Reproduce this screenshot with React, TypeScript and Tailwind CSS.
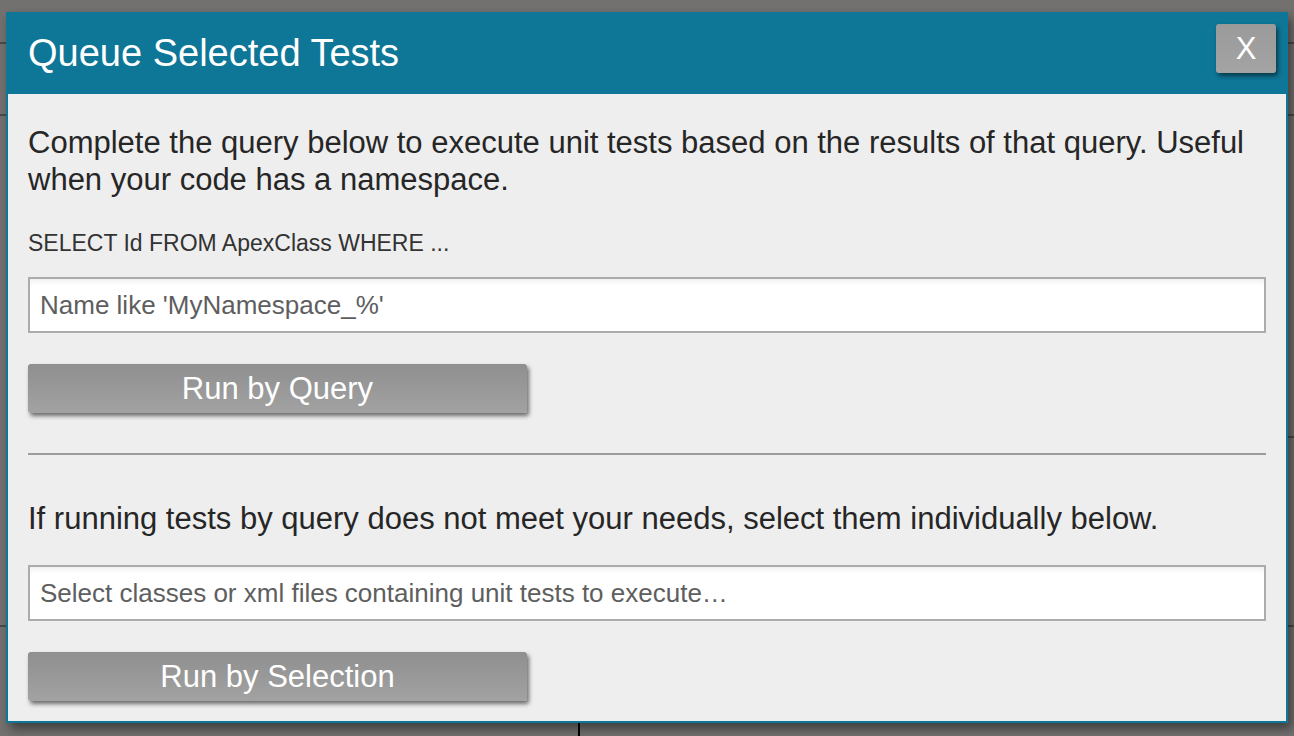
import React from "react";

function QueryInput({ placeholder }: { placeholder: string }) {
  return (
    <input
      type="text"
      placeholder={placeholder}
      className="block w-full h-[56px] border-2 border-[#acacac] bg-white px-[10px] text-[26px] text-[#555] placeholder:text-[#5e5e5e] outline-none shadow-[inset_0_6px_6px_-4px_rgba(0,0,0,0.08)] font-['Liberation_Sans',Arial,sans-serif]"
    />
  );
}

function GrayButton({ label }: { label: string }) {
  return (
    <button
      type="button"
      className="w-[499px] h-[49px] rounded-[3px] bg-gradient-to-b from-[#8f8f8f] to-[#a2a2a2] text-white text-[31px] leading-none shadow-[2px_3px_4px_rgba(0,0,0,0.55)] font-['Liberation_Sans',Arial,sans-serif]"
    >
      {label}
    </button>
  );
}

export default function App() {
  return (
    <div className="relative w-[1294px] h-[736px] overflow-hidden bg-[#727170] flex justify-center pt-[12px] font-['Liberation_Sans',Arial,sans-serif]">
      {/* faint page behind the overlay */}
      <div className="absolute left-0 top-[42px] w-full h-[2px] bg-[#4a4a4a]" />
      <div className="absolute left-0 top-[114px] w-full h-[2px] bg-[#4a4a4a]" />
      <div className="absolute right-0 top-[436px] w-[20px] h-[2px] bg-[#4a4a4a]" />
      <div className="absolute left-0 top-[625px] w-full h-[2px] bg-[#4a4a4a]" />
      <div className="absolute left-[578px] top-[700px] w-[2px] h-[40px] bg-black" />

      <div className="relative w-[1282px] self-start flex flex-col shadow-[4px_6px_10px_rgba(0,0,0,0.45)]">
        {/* header */}
        <div className="h-[82px] bg-[#0e7697] flex items-center justify-between pl-[22px] pr-[12px]">
          <h1 className="text-white text-[38px] leading-none font-normal">
            Queue Selected Tests
          </h1>
          <button
            type="button"
            className="w-[60px] h-[49px] -mt-[10px] rounded-[3px] bg-gradient-to-b from-[#9a9a9a] to-[#a4a4a4] text-white text-[31px] leading-none shadow-[2px_3px_4px_rgba(0,0,0,0.5)]"
          >
            X
          </button>
        </div>

        {/* body */}
        <div className="bg-[#eeeeee] border-2 border-t-0 border-[#0e7697] px-[20px] pt-[30px] pb-[20px]">
          <p className="text-[31px] leading-[37px] text-[#262626]">
            Complete the query below to execute unit tests based on the results of that query. Useful when your code has a namespace.
          </p>
          <p className="mt-[33px] text-[23px] leading-[24px] text-[#333]">
            SELECT Id FROM ApexClass WHERE ...
          </p>
          <div className="mt-[22px]">
            <QueryInput placeholder="Name like 'MyNamespace_%'" />
          </div>
          <div className="mt-[31px]">
            <GrayButton label="Run by Query" />
          </div>
          <div className="mt-[40px] h-[2px] bg-[#9c9c9c]" />
          <p className="mt-[45px] text-[31px] leading-[37px] text-[#262626]">
            If running tests by query does not meet your needs, select them individually below.
          </p>
          <div className="mt-[28px]">
            <QueryInput placeholder="Select classes or xml files containing unit tests to execute…" />
          </div>
          <div className="mt-[31px]">
            <GrayButton label="Run by Selection" />
          </div>
        </div>
      </div>
    </div>
  );
}
